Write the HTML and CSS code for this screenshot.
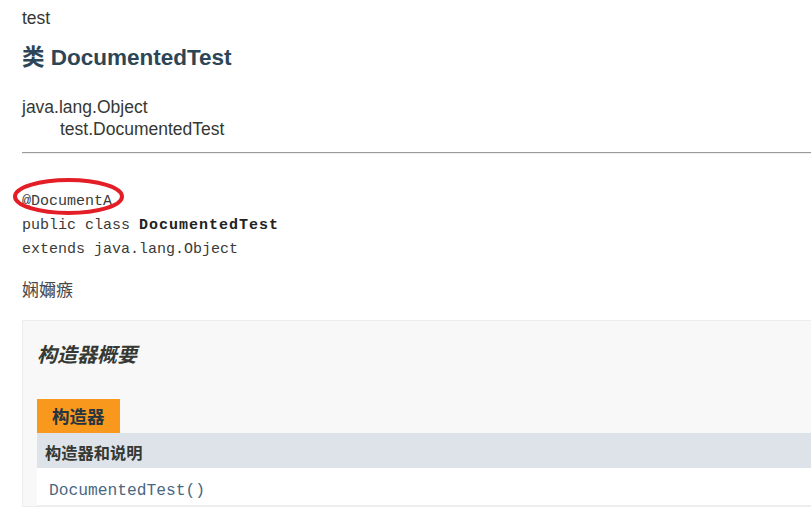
FILE: index.html
```html
<!DOCTYPE html>
<html>
<head>
<meta charset="utf-8">
<link rel="stylesheet" href="styles.css">
</head>
<body>
<div class="page">
  <div class="subtitle">test</div>
  <h2 class="title">类 DocumentedTest</h2>
  <ul class="inheritance">
    <li>java.lang.Object</li>
    <li class="child">test.DocumentedTest</li>
  </ul>
  <hr class="rule">
  <div class="sig">
    <pre class="code">@DocumentA
public class <b>DocumentedTest</b>
extends java.lang.Object</pre>
    <svg class="mark" width="113" height="39" viewBox="0 0 113 39"><ellipse cx="56.5" cy="19.5" rx="53.5" ry="16.5" fill="none" stroke="#e41e26" stroke-width="4"/></svg>
  </div>
  <div class="desc">娴嬭瘯</div>
  <div class="summary">
    <h3 class="summary-title">构造器概要</h3>
    <div class="tab">构造器</div>
    <div class="table">
      <div class="thead">构造器和说明</div>
      <div class="trow"><span class="link">DocumentedTest()</span></div>
    </div>
  </div>
</div>
</body>
</html>
```
FILE: styles.css
```css
html, body {
  margin: 0;
  padding: 0;
  overflow: hidden;
  background: #ffffff;
}
body {
  font-family: "Liberation Sans", Arial, "Noto Sans CJK SC", sans-serif;
  color: #353833;
  font-size: 17.5px;
}
.page {
  padding-left: 22px;
  margin-right: -60px;
}
.subtitle {
  margin-top: 8px;
  line-height: 20px;
}
.title {
  margin: 17px 0 0 0;
  font-size: 22.5px;
  line-height: 26px;
  font-weight: bold;
  color: #2c4557;
}
.inheritance {
  list-style: none;
  margin: 25px 0 0 0;
  padding: 0;
  line-height: 22px;
}
.inheritance .child {
  padding-left: 38px;
}
.rule {
  margin: 12px 0 0 0;
  border: 0;
  border-top: 1px solid #9a9a9a;
  border-bottom: 1px solid #eeeeee;
  height: 0;
}
.sig {
  position: relative;
  margin-top: 36px;
}
.code {
  margin: 0;
  font-family: "Liberation Mono", "Courier New", monospace;
  font-size: 15px;
  line-height: 24px;
  color: #3a3a3a;
}
.code b {
  font-weight: bold;
  letter-spacing: 1px;
  color: #222222;
}
.mark {
  position: absolute;
  left: -10px;
  top: -13px;
}
.desc {
  margin-top: 16px;
  line-height: 22px;
  color: #474747;
  font-family: "Noto Sans CJK SC", sans-serif;
  font-size: 17px;
}
.summary {
  margin-top: 20px;
  background: #f8f8f8;
  border: 1px solid #ededed;
  padding: 21px 0 0 14px;
}
.summary-title {
  margin: 0;
  font-size: 20px;
  line-height: 24px;
  font-style: italic;
  font-weight: bold;
  color: #353833;
  font-family: "Noto Sans CJK SC", sans-serif;
}
.tab {
  display: inline-block;
  margin-top: 33px;
  background: #f8981d;
  color: #253441;
  font-weight: bold;
  font-family: "Noto Sans CJK SC", sans-serif;
  font-size: 17.5px;
  height: 34px;
  line-height: 34px;
  padding: 0 15px;
  width: 53px;
}
.table {
  background: #ffffff;
  border-bottom: 1px solid #eeeeee;
}
.thead {
  background: #dee3e9;
  height: 31px;
  padding: 4px 0 0 8px;
  line-height: 31px;
  font-family: "Noto Sans CJK SC", sans-serif;
  font-size: 16.25px;
  font-weight: bold;
  color: #353833;
}
.trow {
  height: 31px;
  line-height: 31px;
  padding: 6px 0 0 12px;
}
.link {
  font-family: "Liberation Mono", "Courier New", monospace;
  font-size: 16.25px;
  color: #4a6782;
}
```
